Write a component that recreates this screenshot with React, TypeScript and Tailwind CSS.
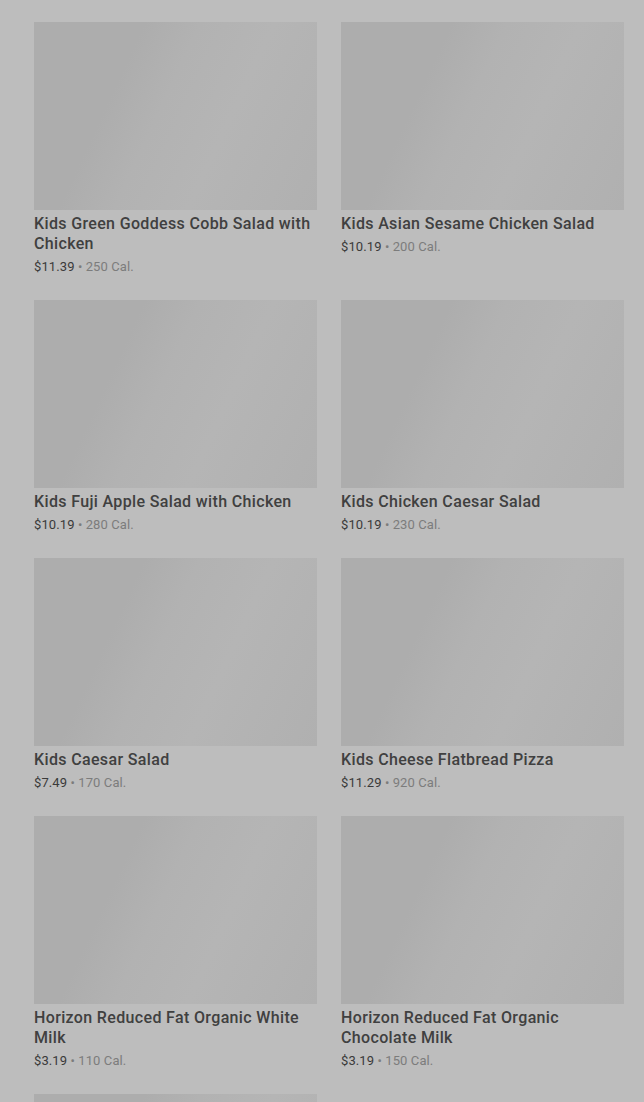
import React from "react";

type Item = { name: string; price: string; cal: string };

const items: Item[] = [
  { name: "Kids Green Goddess Cobb Salad with Chicken", price: "$11.39", cal: "250 Cal." },
  { name: "Kids Asian Sesame Chicken Salad", price: "$10.19", cal: "200 Cal." },
  { name: "Kids Fuji Apple Salad with Chicken", price: "$10.19", cal: "280 Cal." },
  { name: "Kids Chicken Caesar Salad", price: "$10.19", cal: "230 Cal." },
  { name: "Kids Caesar Salad", price: "$7.49", cal: "170 Cal." },
  { name: "Kids Cheese Flatbread Pizza", price: "$11.29", cal: "920 Cal." },
  { name: "Horizon Reduced Fat Organic White Milk", price: "$3.19", cal: "110 Cal." },
  { name: "Horizon Reduced Fat Organic Chocolate Milk", price: "$3.19", cal: "150 Cal." },
];

const imgCls =
  "h-[188px] w-full bg-[linear-gradient(115deg,#adadad_0%,#adadad_30%,#b2b2b2_45%,#b5b5b5_65%,#b0b0b0_100%)]";

function Card({ item }: { item: Item }) {
  return (
    <div className="flex flex-col">
      <div className={imgCls} />
      <div className="mt-[4px] text-[16px] leading-[20px] font-medium tracking-[0.35px] text-[#404040]">
        {item.name}
      </div>
      <div className="mt-[3px] text-[13px] leading-[20px] tracking-[0.1px] text-[#3a3a3a]">
        {item.price}
        <span className="text-[#7c7c7c]"> • {item.cal}</span>
      </div>
    </div>
  );
}

export default function App() {
  return (
    <div
      className="h-[1102px] overflow-hidden bg-[#bdbdbd] pl-[34px] pr-[20px] pt-[22px]"
      style={{ fontFamily: "Roboto, 'Liberation Sans', sans-serif" }}
    >
      <div className="grid grid-cols-2 gap-x-[24px] gap-y-[23px]">
        {items.map((it, i) => (
          <Card key={i} item={it} />
        ))}
        <div className={imgCls} />
      </div>
    </div>
  );
}
